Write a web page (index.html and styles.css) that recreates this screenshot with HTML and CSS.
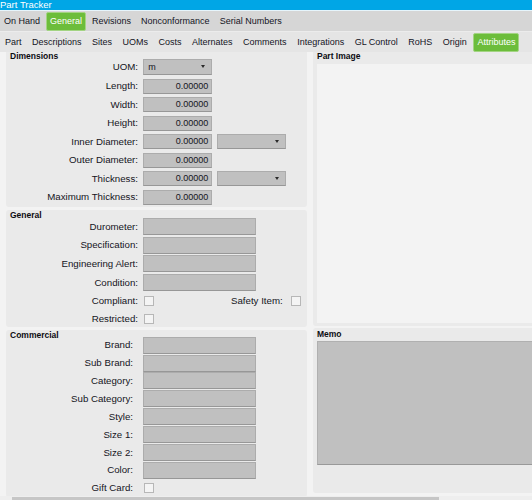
FILE: index.html
```html
<!DOCTYPE html>
<html lang="en">
<head>
<meta charset="utf-8">
<title>Part Tracker</title>
<link rel="stylesheet" href="styles.css">
</head>
<body>
<div class="app">
  <header class="titlebar">Part Tracker</header>
  <nav class="tabs tabs-main">
    <span class="tab">On Hand</span>
    <span class="tab active">General</span>
    <span class="tab">Revisions</span>
    <span class="tab">Nonconformance</span>
    <span class="tab">Serial Numbers</span>
  </nav>
  <nav class="tabs tabs-sub">
    <span class="tab">Part</span>
    <span class="tab">Descriptions</span>
    <span class="tab">Sites</span>
    <span class="tab">UOMs</span>
    <span class="tab">Costs</span>
    <span class="tab">Alternates</span>
    <span class="tab">Comments</span>
    <span class="tab">Integrations</span>
    <span class="tab">GL Control</span>
    <span class="tab">RoHS</span>
    <span class="tab">Origin</span>
    <span class="tab active">Attributes</span>
  </nav>
  <main class="content">
    <div class="scroll">
      <div class="col col-left">
        <section class="panel">
          <div class="panel-title">Dimensions</div>
          <div class="fields fields-dims">
            <div class="row row-uom"><label>UOM:</label><div class="select select-uom"><span>m</span><i class="caret"></i></div></div>
            <div class="row"><label>Length:</label><div class="input num">0.00000</div></div>
            <div class="row"><label>Width:</label><div class="input num">0.00000</div></div>
            <div class="row"><label>Height:</label><div class="input num">0.00000</div></div>
            <div class="row"><label>Inner Diameter:</label><div class="input num">0.00000</div><div class="select select-unit"><span></span><i class="caret"></i></div></div>
            <div class="row"><label>Outer Diameter:</label><div class="input num">0.00000</div></div>
            <div class="row"><label>Thickness:</label><div class="input num">0.00000</div><div class="select select-unit"><span></span><i class="caret"></i></div></div>
            <div class="row"><label>Maximum Thickness:</label><div class="input num">0.00000</div></div>
          </div>
        </section>
        <section class="panel panel-general">
          <div class="panel-title">General</div>
          <div class="fields fields-general">
            <div class="row"><label>Durometer:</label><div class="input text"></div></div>
            <div class="row"><label>Specification:</label><div class="input text"></div></div>
            <div class="row"><label>Engineering Alert:</label><div class="input text"></div></div>
            <div class="row"><label>Condition:</label><div class="input text"></div></div>
            <div class="row check-row first-check"><label>Compliant:</label><span class="checkbox"></span><span class="spacer"></span><span class="inline-label">Safety Item:</span><span class="checkbox end"></span></div>
            <div class="row check-row"><label>Restricted:</label><span class="checkbox"></span></div>
          </div>
        </section>
        <section class="panel">
          <div class="panel-title">Commercial</div>
          <div class="fields fields-commercial">
            <div class="row"><label>Brand:</label><div class="input text"></div></div>
            <div class="row"><label>Sub Brand:</label><div class="input text"></div></div>
            <div class="row"><label>Category:</label><div class="input text"></div></div>
            <div class="row"><label>Sub Category:</label><div class="input text"></div></div>
            <div class="row"><label>Style:</label><div class="input text"></div></div>
            <div class="row"><label>Size 1:</label><div class="input text"></div></div>
            <div class="row"><label>Size 2:</label><div class="input text"></div></div>
            <div class="row"><label>Color:</label><div class="input text"></div></div>
            <div class="row check-row gift"><label>Gift Card:</label><span class="checkbox"></span></div>
          </div>
        </section>
      </div>
      <div class="col col-right">
        <section class="panel panel-side panel-image">
          <div class="panel-title">Part Image</div>
          <div class="image-box"></div>
        </section>
        <section class="panel panel-side panel-memo">
          <div class="panel-title">Memo</div>
          <div class="memo-box"></div>
        </section>
      </div>
    </div>
  </main>
  <div class="hscroll"><div class="thumb"></div></div>
</div>
</body>
</html>
```
FILE: styles.css
```css
* { box-sizing: border-box; }
html, body { margin: 0; padding: 0; }
body {
  width: 532px;
  height: 500px;
  overflow: hidden;
  background: #f3f3f3;
  font-family: "Liberation Sans", Arial, sans-serif;
  color: #14141c;
}
.app {
  width: 532px;
  height: 500px;
  display: flex;
  flex-direction: column;
  overflow: hidden;
}
.titlebar {
  flex: 0 0 11px;
  height: 11px;
  background: #00a6e6;
  border-bottom: 1px solid #e6f5fc;
  color: #ffffff;
  font-size: 9.5px;
  line-height: 10px;
  white-space: nowrap;
  overflow: hidden;
}
.tabs {
  display: flex;
  gap: 2px;
  white-space: nowrap;
  overflow: hidden;
}
.tabs-main {
  flex: 0 0 21px;
  height: 21px;
  padding-top: 1px;
  background: #d6d6d6;
  border-bottom: 1px solid #ececec;
}
.tabs-sub {
  flex: 0 0 20px;
  height: 20px;
  padding: 1px 0 0 1px;
  gap: 2.5px;
  background: #e5e5e5;
}
.tab {
  height: 19px;
  line-height: 19px;
  padding: 0 4px;
  font-size: 9px;
  color: #14141e;
}
.tab.active {
  background: #6cbd3b;
  border: 1px solid #a3d483;
  border-radius: 2px;
  line-height: 17px;
  padding: 0 3px;
  color: #ffffff;
}
.content {
  flex: 0 0 444px;
  height: 444px;
  overflow: hidden;
}
.scroll {
  display: flex;
  gap: 6.6px;
  padding-left: 6px;
  margin-top: -2px;
}
.col {
  display: flex;
  flex-direction: column;
  flex-shrink: 0;
}
.col-left { width: 300.7px; gap: 3px; }
.col-right { width: 260px; gap: 2.5px; }
.panel {
  background: #eaeaea;
  border-radius: 3px;
  padding: 1.5px 4px 2px;
}
.panel-general { padding-bottom: 0; }
.panel-title {
  height: 6.5px;
  font-size: 8.5px;
  font-weight: bold;
  line-height: 9px;
  color: #0c0c12;
  white-space: nowrap;
}
.fields {
  display: flex;
  flex-direction: column;
}
.fields-dims { margin-top: 0.5px; gap: 3.5px; }
.fields-general { margin-top: 0.5px; gap: 1.7px; }
.fields-commercial { margin-top: -1px; gap: 0.9px; }
.row {
  display: flex;
  align-items: center;
}
.row label {
  flex: 0 0 128px;
  width: 128px;
  margin-right: 5.3px;
  text-align: right;
  font-size: 9.7px;
  line-height: 12px;
  white-space: nowrap;
  color: #14141c;
}
.fields-commercial .row label {
  flex-basis: 123px;
  width: 123px;
  margin-right: 10.3px;
}
.row-uom { margin-bottom: 0.5px; }
.input, .select {
  background: #c0c0c0;
  border: 1px solid #acacac;
  border-bottom-color: #979797;
  font-size: 9px;
  color: #14141c;
}
.input.num {
  width: 68.7px;
  height: 15px;
  line-height: 12px;
  text-align: right;
  padding-right: 2.7px;
}
.input.text {
  width: 112.4px;
  height: 17px;
}
.select {
  display: flex;
  align-items: center;
  justify-content: space-between;
  width: 68.7px;
  padding: 0 6px 0 4px;
}
.select-uom { height: 16px; }
.select-unit { height: 15px; margin-left: 5.3px; }
.caret {
  display: block;
  width: 0;
  height: 0;
  border-left: 2.5px solid transparent;
  border-right: 2.5px solid transparent;
  border-top: 3px solid #2a2a2a;
}
.check-row { height: 15.7px; }
.first-check { margin-top: 0.9px; }
.gift { height: 15.5px; }
.checkbox {
  flex: 0 0 10px;
  width: 10px;
  height: 10px;
  margin-left: 0.7px;
  background: #f4f4f4;
  border: 1px solid #b7b7b7;
}
.checkbox.end { margin-left: 0; margin-right: 2px; }
.spacer { flex: 1; }
.inline-label {
  font-size: 9.7px;
  line-height: 12px;
  margin-right: 8px;
  white-space: nowrap;
}
.panel-side { padding: 1.5px 0 3.3px 3.7px; }
.image-box {
  margin-top: 6px;
  height: 258.7px;
  background: #f3f3f3;
}
.panel-memo { padding-bottom: 27.3px; }
.memo-box {
  margin-top: 4.8px;
  height: 124.2px;
  background: #c0c0c0;
  border: 1px solid #b0b0b0;
  border-bottom-color: #999999;
}
.hscroll {
  flex: 0 0 4px;
  height: 4px;
  padding-top: 0.7px;
  background: #eeeeee;
}
.thumb {
  margin-left: 11.7px;
  width: 427.3px;
  height: 4px;
  background: #c6c6c6;
}
```
